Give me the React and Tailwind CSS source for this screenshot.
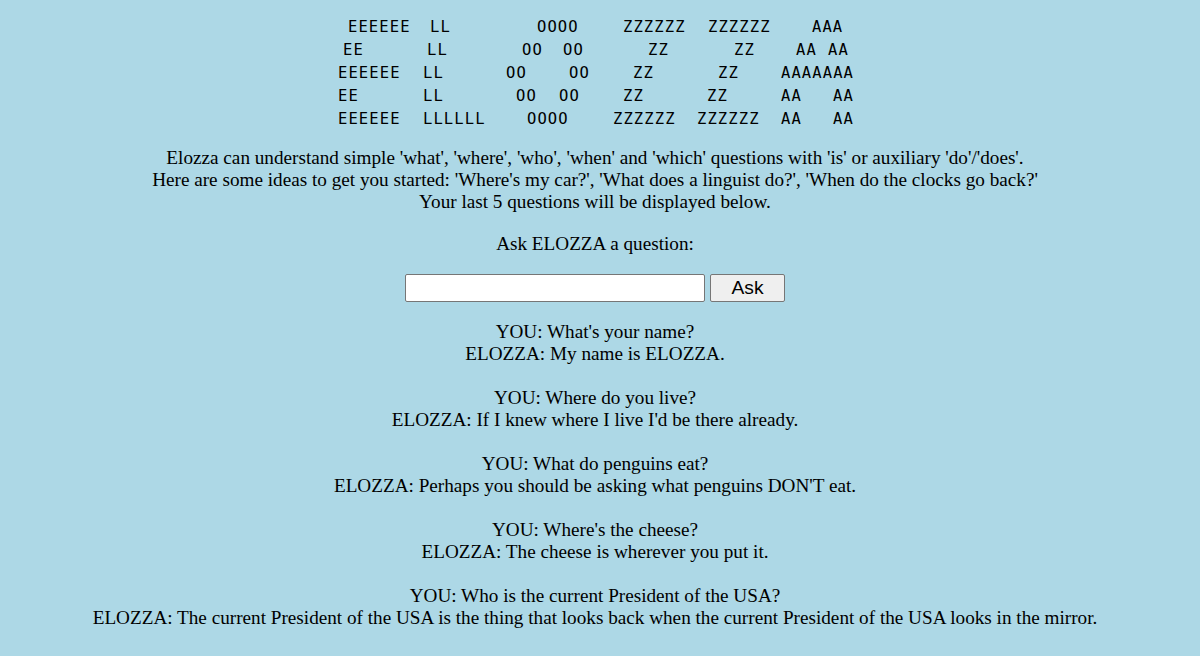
export default function App() {
  const mono = "font-['DejaVu_Sans_Mono',monospace] text-[15.5px] tracking-[1.1px] leading-[23px] whitespace-pre text-black";
  return (
    <div className="min-h-[656px] w-full bg-[#add8e6] pr-[10px] text-black font-['Liberation_Serif',serif] text-[19.2px] leading-[22px]">
      <div className="pt-[16px]">
        <div className={`mx-auto w-[514px] ${mono}`}>
          <div className="flex">
            <span className="ml-[10px] w-[82px] shrink-0">EEEEEE</span>
            <span className="w-[107px] shrink-0">LL</span>
            <span className="w-[86px] shrink-0">OOOO</span>
            <span className="w-[85px] shrink-0">ZZZZZZ</span>
            <span className="w-[104px] shrink-0">ZZZZZZ</span>
            <span className="shrink-0">AAA</span>
          </div>
          <div className="flex">
            <span className="ml-[5px] w-[84px] shrink-0">EE</span>
            <span className="w-[95px] shrink-0">LL</span>
            <span className="w-[41px] shrink-0">OO</span>
            <span className="w-[85px] shrink-0">OO</span>
            <span className="w-[86px] shrink-0">ZZ</span>
            <span className="w-[62px] shrink-0">ZZ</span>
            <span className="w-[32px] shrink-0">AA</span>
            <span className="shrink-0">AA</span>
          </div>
          <div className="flex">
            <span className="w-[85px] shrink-0">EEEEEE</span>
            <span className="w-[83px] shrink-0">LL</span>
            <span className="w-[63px] shrink-0">OO</span>
            <span className="w-[64px] shrink-0">OO</span>
            <span className="w-[85px] shrink-0">ZZ</span>
            <span className="w-[63px] shrink-0">ZZ</span>
            <span className="shrink-0">AAAAAAA</span>
          </div>
          <div className="flex">
            <span className="w-[85px] shrink-0">EE</span>
            <span className="w-[93px] shrink-0">LL</span>
            <span className="w-[43px] shrink-0">OO</span>
            <span className="w-[64px] shrink-0">OO</span>
            <span className="w-[84px] shrink-0">ZZ</span>
            <span className="w-[74px] shrink-0">ZZ</span>
            <span className="w-[52px] shrink-0">AA</span>
            <span className="shrink-0">AA</span>
          </div>
          <div className="flex">
            <span className="w-[85px] shrink-0">EEEEEE</span>
            <span className="w-[104px] shrink-0">LLLLLL</span>
            <span className="w-[86px] shrink-0">OOOO</span>
            <span className="w-[84px] shrink-0">ZZZZZZ</span>
            <span className="w-[84px] shrink-0">ZZZZZZ</span>
            <span className="w-[52px] shrink-0">AA</span>
            <span className="shrink-0">AA</span>
          </div>
        </div>
      </div>

      <div className="mt-[16px] text-center">
        <p>Elozza can understand simple 'what', 'where', 'who', 'when' and 'which' questions with 'is' or auxiliary 'do'/'does'.</p>
        <p>Here are some ideas to get you started: 'Where's my car?', 'What does a linguist do?', 'When do the clocks go back?'</p>
        <p>Your last 5 questions will be displayed below.</p>
      </div>

      <p className="mt-[20px] text-center">Ask ELOZZA a question:</p>

      <div className="mt-[19px] flex justify-center">
        <input type="text" className="h-[28px] w-[300px] rounded-[2px] border border-[#767676] bg-white px-[2px] outline-none" />
        <button className="ml-[5px] h-[28px] w-[75px] rounded-[2px] border border-[#767676] bg-[#efefef] font-['Liberation_Sans',sans-serif] text-[19.2px] leading-[26px] text-black">Ask</button>
      </div>

      <div className="mt-[19px] pb-[20px] text-center">
        <p>YOU: What's your name?</p>
        <p>ELOZZA: My name is ELOZZA.</p>
        <p className="h-[22px]"></p>
        <p>YOU: Where do you live?</p>
        <p>ELOZZA: If I knew where I live I'd be there already.</p>
        <p className="h-[22px]"></p>
        <p>YOU: What do penguins eat?</p>
        <p>ELOZZA: Perhaps you should be asking what penguins DON'T eat.</p>
        <p className="h-[22px]"></p>
        <p>YOU: Where's the cheese?</p>
        <p>ELOZZA: The cheese is wherever you put it.</p>
        <p className="h-[22px]"></p>
        <p>YOU: Who is the current President of the USA?</p>
        <p>ELOZZA: The current President of the USA is the thing that looks back when the current President of the USA looks in the mirror.</p>
      </div>
    </div>
  );
}
